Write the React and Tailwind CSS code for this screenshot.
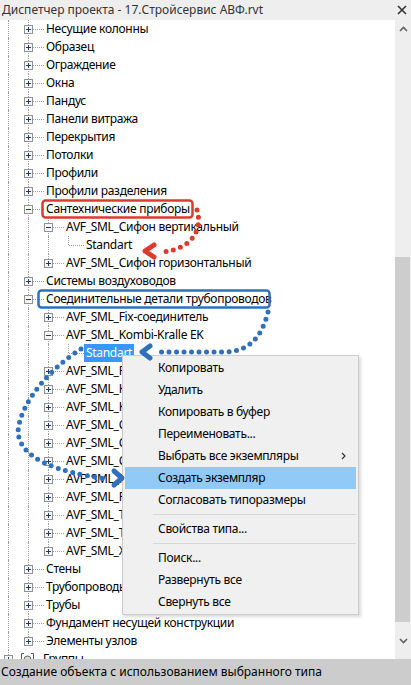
import React from 'react';

const families = [
  { t: 'Несущие колонны' },
  { t: 'Образец' },
  { t: 'Ограждение' },
  { t: 'Окна' },
  { t: 'Пандус' },
  { t: 'Панели витража' },
  { t: 'Перекрытия' },
  { t: 'Потолки' },
  { t: 'Профили' },
  { t: 'Профили разделения' },
  {
    t: 'Сантехнические приборы',
    kids: [
      { t: 'AVF_SML_Сифон вертикальный', kids: [{ t: 'Standart', leaf: true }] },
      { t: 'AVF_SML_Сифон горизонтальный' },
    ],
  },
  { t: 'Системы воздуховодов' },
  {
    t: 'Соединительные детали трубопроводов',
    kids: [
      { t: 'AVF_SML_Fix-соединитель' },
      { t: 'AVF_SML_Kombi-Kralle EK', kids: [{ t: 'Standart', leaf: true, selected: true }] },
      { t: 'AVF_SML_Rapid-соединитель' },
      { t: 'AVF_SML_Kombi-Kralle' },
      { t: 'AVF_SML_Kralle' },
      { t: 'AVF_SML_CV-муфта' },
      { t: 'AVF_SML_Clip' },
      { t: 'AVF_SML_Confix' },
      { t: 'AVF_SML_Rohrbogen' },
      { t: 'AVF_SML_Rapid' },
      { t: 'AVF_SML_Tiefe' },
      { t: 'AVF_SML_Tiefe KS' },
      { t: 'AVF_SML_X-Kralle' },
    ],
  },
  { t: 'Стены' },
  { t: 'Трубопроводы' },
  { t: 'Трубы' },
  { t: 'Фундамент несущей конструкции' },
  { t: 'Элементы узлов' },
];

// flatten the tree into rows, keeping track of which guide columns continue
const flatten = (nodes, level, guides, out) => {
  nodes.forEach((n, i) => {
    const last = i === nodes.length - 1;
    const box = n.leaf ? null : n.kids ? '-' : '+';
    out.push({ level, text: n.t, box, guides, last, selected: n.selected });
    if (n.kids) flatten(n.kids, level + 1, [...guides, !last], out);
  });
  return out;
};

const rows = flatten(families, 1, [true], []);

const menu = [
  { t: 'Копировать' },
  { t: 'Удалить' },
  { t: 'Копировать в буфер' },
  { t: 'Переименовать...' },
  { t: 'Выбрать все экземпляры', sub: true },
  { t: 'Создать экземпляр', active: true },
  { t: 'Согласовать типоразмеры' },
  { sep: true },
  { t: 'Свойства типа...' },
  { sep: true },
  { t: 'Поиск...' },
  { t: 'Развернуть все' },
  { t: 'Свернуть все' },
];

const ExpandBox = ({ open }) => (
  <svg width="9" height="9" viewBox="0 0 9 9">
    <rect x="0.5" y="0.5" width="8" height="8" fill="#f7f7f7" stroke="#919191" />
    <path d="M2 4.5h5" stroke="#1e3b6e" />
    {!open && <path d="M4.5 2v5" stroke="#1e3b6e" />}
  </svg>
);

const Guide = ({ on }) => (
  <div className="w-[20px] h-full shrink-0">
    {on && <div className="ml-[8px] w-0 h-full border-l border-dotted border-[#a0a0a0]" />}
  </div>
);

const Connector = ({ box, last, wide = true }) => (
  <div className={`relative h-full shrink-0 ${wide ? 'w-[24px]' : 'w-[14px]'}`}>
    <div className="absolute left-[8px] top-0 h-[9px] border-l border-dotted border-[#a0a0a0]" />
    {!last && <div className="absolute left-[8px] top-[9px] bottom-0 border-l border-dotted border-[#a0a0a0]" />}
    <div className="absolute left-[9px] right-0 top-[9px] border-t border-dotted border-[#a0a0a0]" />
    {box && (
      <div className="absolute left-[4px] top-[5px] flex">
        <ExpandBox open={box === '-'} />
      </div>
    )}
  </div>
);

const TreeRow = ({ row }) => (
  <div className="flex h-[18px] items-stretch shrink-0">
    {row.guides.map((g, i) => (
      <Guide key={i} on={g} />
    ))}
    <Connector box={row.box} last={row.last} />
    <div
      className={`px-[2px] leading-[18px] whitespace-nowrap ${
        row.selected ? 'bg-[#3399ff] text-white' : 'text-black'
      }`}
    >
      {row.text}
    </div>
  </div>
);

const Annotations = () => (
  <svg className="absolute inset-0 pointer-events-none" width="411" height="685" viewBox="0 0 411 685">
    {/* red frame + arrow */}
    <rect x="42.5" y="200.5" width="150" height="17" rx="3" fill="none" stroke="#dd3b2e" strokeWidth="2.5" />
    <path d="M197 210 C202 226, 196 248, 163 252" fill="none" stroke="#dd3b2e" strokeWidth="5" strokeLinecap="round" strokeDasharray="0 7.5" />
    <path d="M154 245 L145 251 L154 257" fill="none" stroke="#dd3b2e" strokeWidth="5" strokeLinecap="round" strokeLinejoin="round" />

    {/* blue frame + arrows */}
    <rect x="38.5" y="290.5" width="231" height="17" rx="3" fill="none" stroke="#3070bb" strokeWidth="2.5" />
    <path d="M268 312 C262 336, 250 351, 226 352 L156 352" fill="none" stroke="#3070bb" strokeWidth="5" strokeLinecap="round" strokeDasharray="0 7.5" />
    <path d="M150 346 L142 352 L150 358" fill="none" stroke="#3070bb" strokeWidth="5" strokeLinecap="round" strokeLinejoin="round" />
    <path d="M81 349 C55 365, 20 400, 18 432 C20 458, 55 472, 108 479" fill="none" stroke="#3070bb" strokeWidth="5" strokeLinecap="round" strokeDasharray="0 7.5" />
    <path d="M114 471 L122 478 L114 485" fill="none" stroke="#3070bb" strokeWidth="5" strokeLinecap="round" strokeLinejoin="round" />
  </svg>
);

export default function App() {
  return (
    <div
      className="relative w-[411px] h-[685px] flex flex-col bg-white overflow-hidden text-[12px]"
      style={{ fontFamily: '"Segoe UI", "Noto Sans", sans-serif' }}
    >
      {/* title bar */}
      <div className="h-[20px] shrink-0 flex items-center justify-between bg-[#eeeeee] pl-[2px] pr-[4px] text-[#333]">
        <span className="whitespace-nowrap">Диспетчер проекта - 17.Стройсервис АВФ.rvt</span>
        <svg width="10" height="10" viewBox="0 0 10 10">
          <path d="M1 1L9 9M9 1L1 9" stroke="#333" strokeWidth="1.6" />
        </svg>
      </div>

      <div className="flex-1 flex min-h-0">
        {/* tree */}
        <div className="flex-1 flex flex-col overflow-hidden tracking-[-0.3px]">
          {rows.map((r, i) => (
            <TreeRow key={i} row={r} />
          ))}
          <div className="flex h-[18px] items-stretch shrink-0">
            <Connector box="+" last wide={false} />
            <div className="flex items-start pt-[3px] pl-[7px] pr-[9px]">
              <svg width="13" height="13" viewBox="0 0 13 13">
                <path d="M3 .5H.5v12H3M10 .5h2.5v12H10" fill="none" stroke="#555" />
                <circle cx="6.5" cy="6.5" r="3.5" fill="#d8d8d8" stroke="#666" />
              </svg>
            </div>
            <div className="leading-[18px]">Группы</div>
          </div>
        </div>

        {/* scrollbar */}
        <div className="w-[16px] shrink-0 flex flex-col bg-[#eeeeee]">
          <div className="h-[17px] flex items-center justify-center">
            <svg width="9" height="6" viewBox="0 0 9 6">
              <path d="M1 5L4.5 1.5L8 5" fill="none" stroke="#606060" strokeWidth="1.6" />
            </svg>
          </div>
          <div className="h-[220px]" />
          <div className="h-[365px] mr-[1px] bg-[#cdcdcd]" />
          <div className="flex-1 flex items-center justify-center">
            <svg width="9" height="6" viewBox="0 0 9 6">
              <path d="M1 1L4.5 4.5L8 1" fill="none" stroke="#606060" strokeWidth="1.6" />
            </svg>
          </div>
        </div>
      </div>

      {/* status bar */}
      <div className="h-[26px] shrink-0 flex items-center bg-[#cccccc] px-[1px] text-black whitespace-nowrap">
        Создание объекта с использованием выбранного типа
      </div>

      {/* context menu */}
      <div className="absolute left-[122px] top-[355px] w-[237px] border border-[#cccccc] bg-[#f0f0f0] py-[1px] tracking-[-0.3px] shadow-[2px_2px_3px_rgba(0,0,0,0.15)]">
        {menu.map((m, i) =>
          m.sep ? (
            <div key={i} className="h-[7px] flex items-center mx-[2px]">
              <div className="ml-[28px] flex-1 border-t border-[#d7d7d7]" />
            </div>
          ) : (
            <div
              key={i}
              className={`h-[22px] mx-[2px] pl-[33px] pr-[10px] flex items-center justify-between text-black ${
                m.active ? 'bg-[#91c9f7]' : ''
              }`}
            >
              <span className="whitespace-nowrap">{m.t}</span>
              {m.sub && (
                <svg width="5" height="8" viewBox="0 0 5 8">
                  <path d="M1 1L4 4L1 7" fill="none" stroke="#333" strokeWidth="1.2" />
                </svg>
              )}
            </div>
          )
        )}
      </div>

      <Annotations />
    </div>
  );
}
